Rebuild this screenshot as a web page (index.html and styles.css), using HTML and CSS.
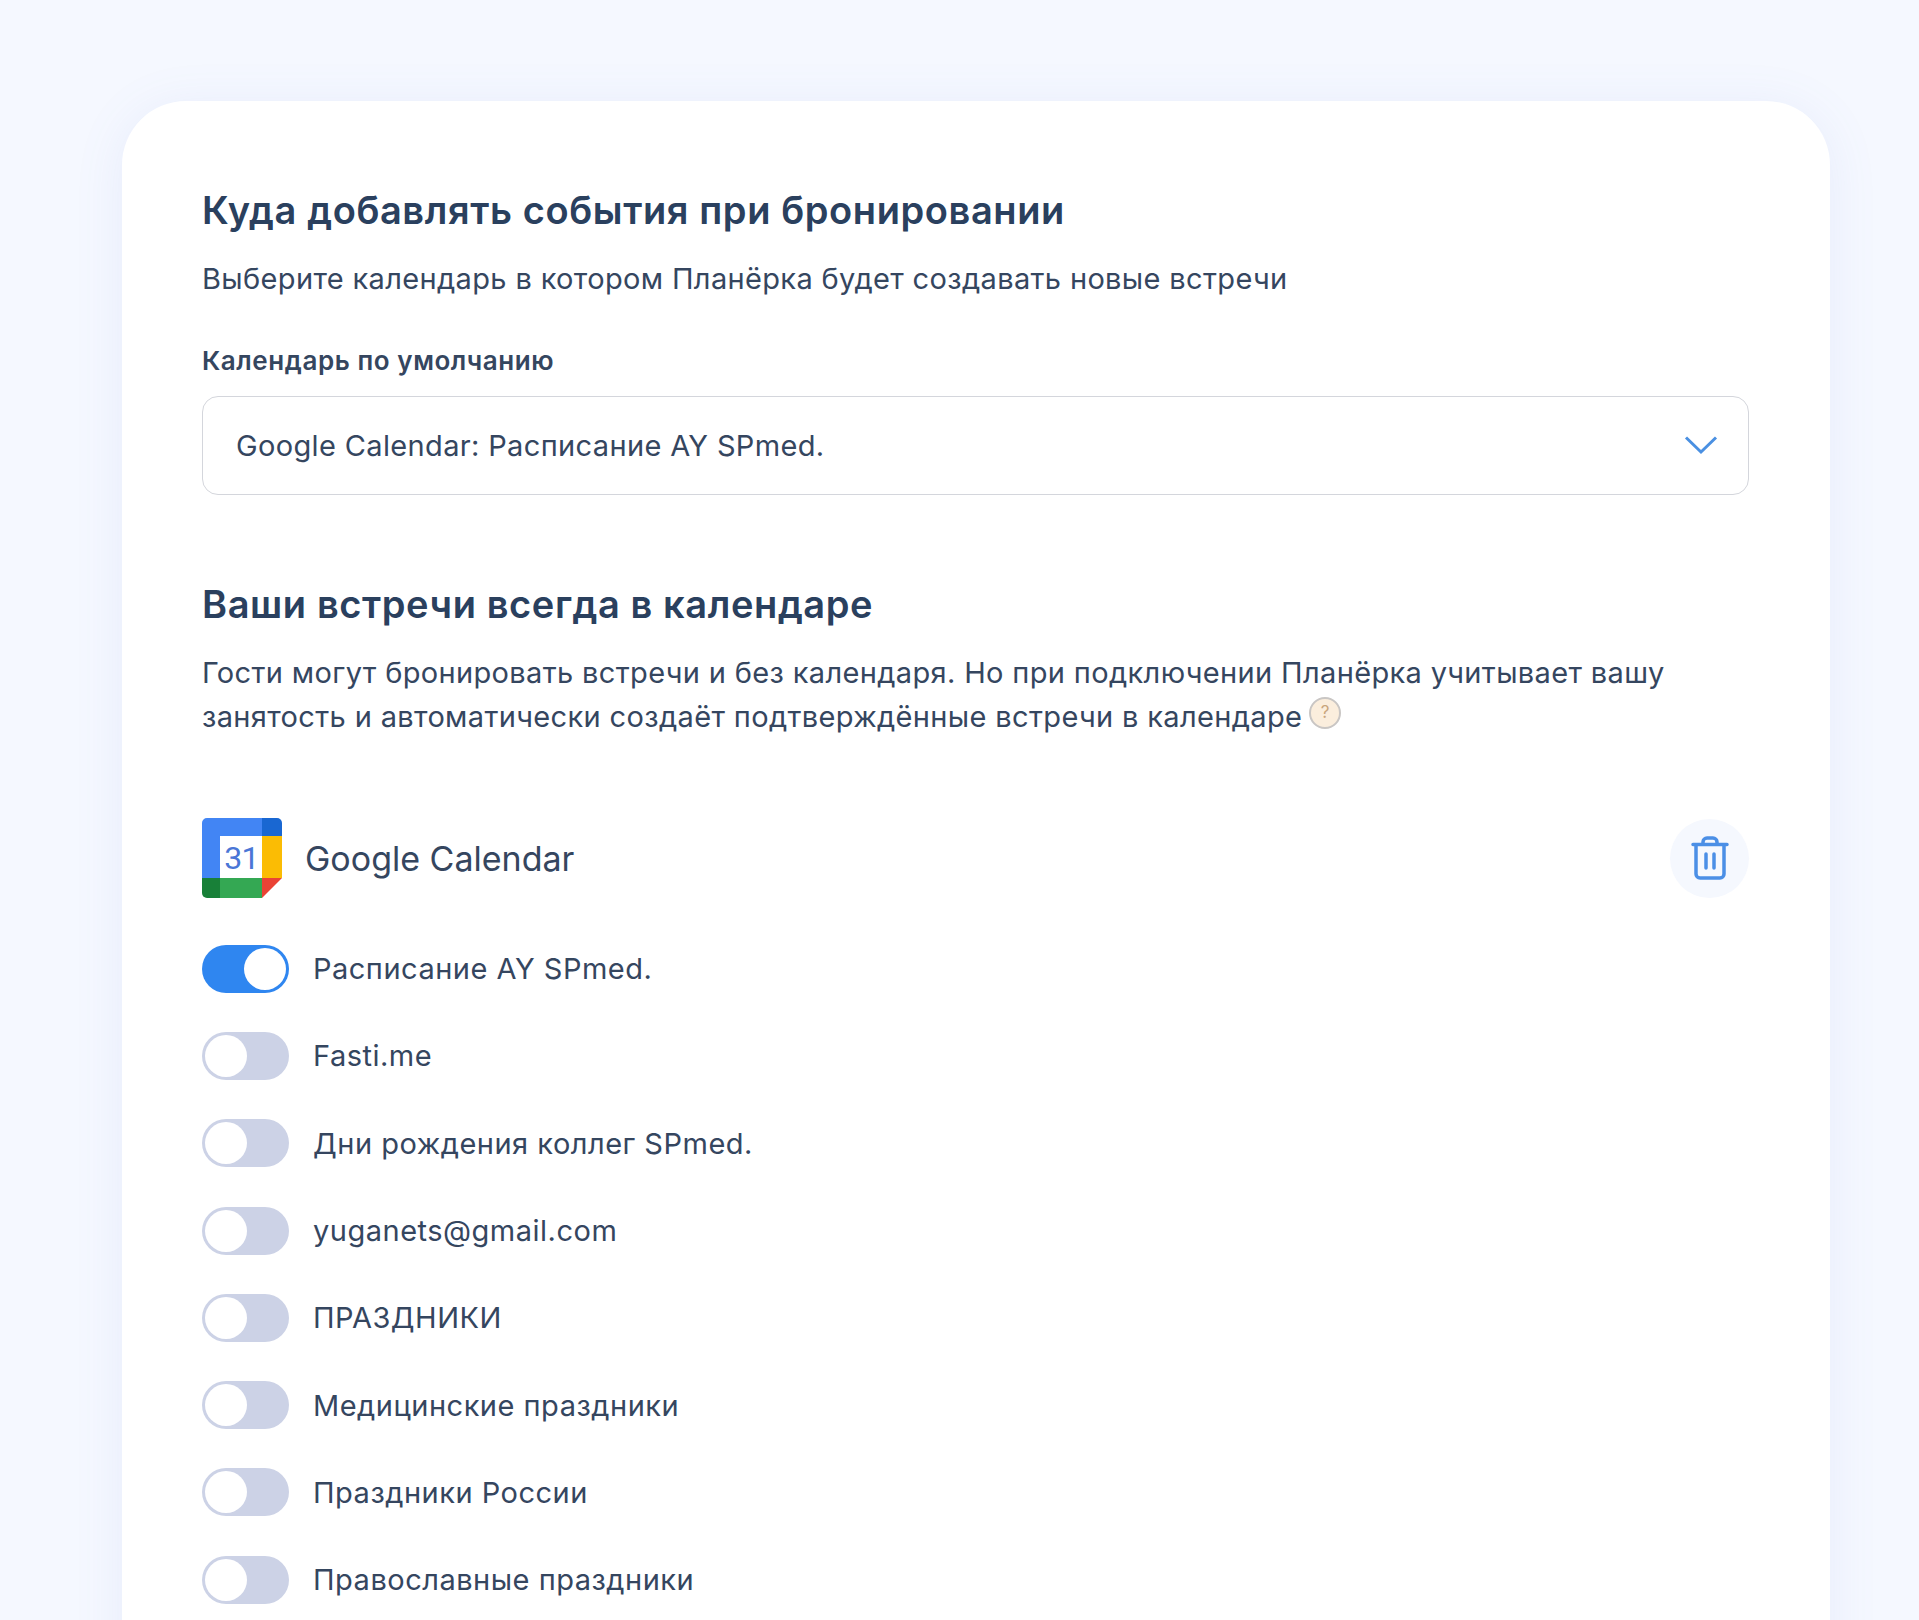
FILE: index.html
```html
<!DOCTYPE html>
<html lang="ru">
<head>
  <meta charset="UTF-8">
  <title>Планёрка</title>
  <link rel="stylesheet" href="styles.css">
</head>
<body>
  <main class="card">
    <section class="default-calendar">
      <h2 class="title">Куда добавлять события при бронировании</h2>
      <p class="text subtitle">Выберите календарь в котором Планёрка будет создавать новые встречи</p>
      <div class="field-label">Календарь по умолчанию</div>
      <div class="select">
        <span>Google Calendar: Расписание AY SPmed.</span>
        <svg class="chevron" width="34" height="20" viewBox="0 0 34 20"><path d="M2 1.500L17 16L32 1.500"/></svg>
      </div>
    </section>

    <section class="connected">
      <h2 class="title">Ваши встречи всегда в календаре</h2>
      <p class="text intro">Гости могут бронировать встречи и без календаря. Но при подключении Планёрка учитывает вашу занятость и автоматически создаёт подтверждённые встречи в календаре<span class="hint">?</span></p>

      <div class="provider">
        <svg class="gcal" width="80" height="80" viewBox="0 0 80 80">
          <path fill="#4285f4" d="M5 0H60V18H18V60H0V5A5 5 0 0 1 5 0Z"/>
          <path fill="#1967d2" d="M60 0H75A5 5 0 0 1 80 5V18H60Z"/>
          <path fill="#fbbc04" d="M60 18H80V60H60Z"/>
          <path fill="#34a853" d="M18 60H60V80H18Z"/>
          <path fill="#188038" d="M0 60H18V80H5A5 5 0 0 1 0 75Z"/>
          <path fill="#ea4335" d="M60 60H80L60 80Z"/>
          <path fill="#fff" d="M18 18H60V60H18Z"/>
          <text x="39.500" y="51" text-anchor="middle" class="gcal-day">31</text>
        </svg>
        <span class="provider-name">Google Calendar</span>
        <button class="delete-btn">
          <svg width="38" height="44" viewBox="0 0 38 44"><path d="M2 8.500H36M5 8.500V38A4 4 0 0 0 9 42H29A4 4 0 0 0 33 38V8.500M12 8.500V6A4 4 0 0 1 16 2H22A4 4 0 0 1 26 6V8.500M15 18V32M23 18V32"/></svg>
        </button>
      </div>

      <ul class="calendars">
        <li class="calendar-row"><span class="toggle on"></span>Расписание AY SPmed.</li>
        <li class="calendar-row"><span class="toggle"></span>Fasti.me</li>
        <li class="calendar-row"><span class="toggle"></span>Дни рождения коллег SPmed.</li>
        <li class="calendar-row"><span class="toggle"></span>yuganets@gmail.com</li>
        <li class="calendar-row"><span class="toggle"></span>ПРАЗДНИКИ</li>
        <li class="calendar-row"><span class="toggle"></span>Медицинские праздники</li>
        <li class="calendar-row"><span class="toggle"></span>Праздники России</li>
        <li class="calendar-row"><span class="toggle"></span>Православные праздники</li>
      </ul>
    </section>
  </main>
</body>
</html>
```

FILE: styles.css
```css
* {
  margin: 0;
  padding: 0;
  box-sizing: border-box;
}

:root {
  --bg-color: #f5f8ff;
  --text-color: #35465f;
  --main-color: #2f86f0;
}

html, body {
  height: 1620px;
  overflow: hidden;
}

body {
  background: var(--bg-color);
  color: var(--text-color);
  font-family: 'Inter', sans-serif;
  padding: 101px 89px 0 122px;
}

.card {
  background: #fff;
  border-radius: 64px 64px 0 0;
  padding: 82px 81px 0 80px;
  height: 1600px;
  box-shadow: 0 6px 50px rgba(110, 130, 220, 0.1);
}

.title {
  font-size: 38px;
  line-height: 54px;
  font-weight: 600;
  letter-spacing: 0.6px;
  color: #2a405e;
}

.text {
  font-size: 29px;
  line-height: 44px;
  letter-spacing: 0.35px;
}

.subtitle {
  margin-top: 20px;
}

.field-label {
  margin-top: 45px;
  font-size: 26px;
  line-height: 30px;
  font-weight: 600;
  letter-spacing: 0.57px;
}

.select {
  margin-top: 20px;
  height: 99px;
  border: 1px solid #d4d6dc;
  border-radius: 16px;
  padding: 0 30px 0 33px;
  display: flex;
  align-items: center;
  justify-content: space-between;
  font-size: 29px;
  letter-spacing: 0.35px;
}

.chevron path {
  fill: none;
  stroke: #4a90e2;
  stroke-width: 3;
}

.connected {
  margin-top: 82px;
}

.intro {
  margin-top: 20px;
}

.hint {
  display: inline-flex;
  align-items: center;
  justify-content: center;
  width: 32px;
  height: 32px;
  margin-left: 7px;
  vertical-align: 9px;
  border: 2px solid #c9c6c4;
  border-radius: 50%;
  background: #fbeedd;
  color: #c9a57c;
  font-size: 17px;
  line-height: 1;
}

.provider {
  margin-top: 79px;
  display: flex;
  align-items: center;
}

.gcal-day {
  font-family: 'Roboto', sans-serif;
  font-size: 32px;
  font-weight: 400;
  letter-spacing: -0.8px;
  fill: #4a76d6;
}

.provider-name {
  margin-left: 23px;
  font-size: 34px;
}

.delete-btn {
  margin-left: auto;
  width: 79px;
  height: 79px;
  border: none;
  border-radius: 50%;
  background: #f5f8fe;
  display: flex;
  align-items: center;
  justify-content: center;
}

.delete-btn path {
  fill: none;
  stroke: #4b8fe6;
  stroke-width: 3.500;
  stroke-linecap: round;
}

.calendars {
  list-style: none;
  margin-top: 27px;
}

.calendar-row {
  height: 87.300px;
  display: flex;
  align-items: center;
  font-size: 29px;
  letter-spacing: 0.5px;
}

.toggle {
  position: relative;
  flex: none;
  width: 87px;
  height: 48px;
  margin-right: 24px;
  border-radius: 24px;
  background: #ccd2e6;
}

.toggle::before {
  content: "";
  position: absolute;
  top: 3px;
  left: 3px;
  width: 42px;
  height: 42px;
  border-radius: 50%;
  background: #fff;
}

.toggle.on {
  background: var(--main-color);
}

.toggle.on::before {
  left: 42px;
}
```
